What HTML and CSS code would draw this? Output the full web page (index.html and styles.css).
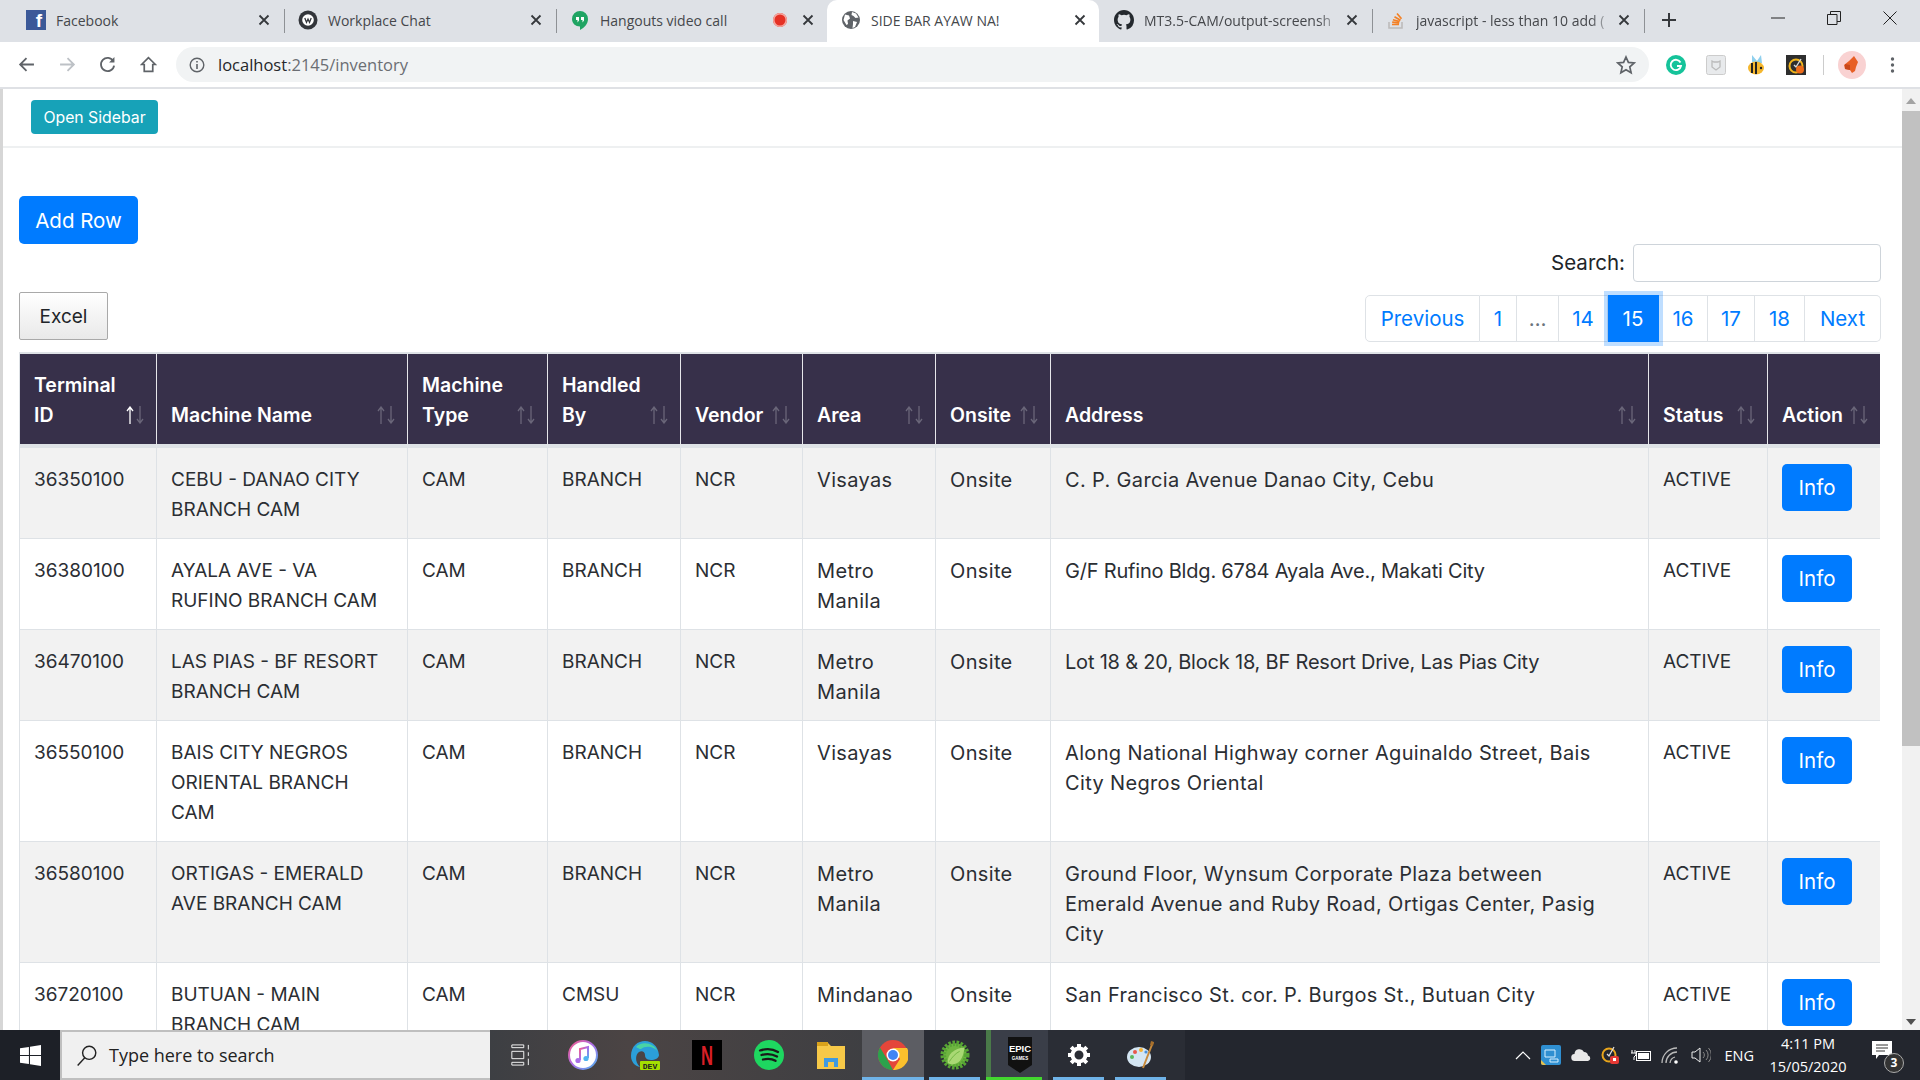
FILE: index.html
```html
<!DOCTYPE html>
<html lang="en">
<head>
    <meta charset="UTF-8">
    <title>SIDE BAR AYAW NA!</title>
    <link rel="stylesheet" href="styles.css">
</head>
<body>
    <svg class="defs" width="0" height="0">
        <symbol id="sort" viewBox="0 0 19 18">
            <path class="up" d="M4 18V1M1 5l3-4 3 4" fill="none" stroke-width="1.3"/>
            <path class="down" d="M14 0v17M11 13l3 4 3-4" fill="none" stroke-width="1.3"/>
        </symbol>
        <symbol id="x" viewBox="0 0 12 12">
            <path d="M1.5 1.5l9 9M10.5 1.5l-9 9" stroke="#35383c" stroke-width="1.8" fill="none"/>
        </symbol>
    </svg>

    <!-- chrome tabs -->
    <div class="tabstrip">
        <div class="tab">
            <span class="fb-icon">f</span>
            <span class="tab-title">Facebook</span>
            <svg class="tab-close"><use href="#x"/></svg>
        </div>
        <div class="tab">
            <svg class="favicon" viewBox="0 0 20 20"><circle cx="10" cy="10" r="9.5" fill="#33363b"/><circle cx="10" cy="10" r="5.8" fill="#fff"/><path d="M6.8 8l1.7 4.4L10 9l1.500 3.400L13.200 8" stroke="#33363b" stroke-width="1.300" fill="none"/></svg>
            <span class="tab-title">Workplace Chat</span>
            <svg class="tab-close"><use href="#x"/></svg>
        </div>
        <div class="tab">
            <svg class="favicon" viewBox="0 0 20 20"><path d="M10 1a8 8 0 0 0-8 8c0 4.400 3.600 7.500 8 7.500V20c4.500-2.200 8-6.300 8-11a8 8 0 0 0-8-8z" fill="#1fa463"/><path d="M6 7h3v3.500L7.500 12.500V10H6zM11 7h3v3.500l-1.500 2V10H11z" fill="#fff"/></svg>
            <span class="tab-title">Hangouts video call</span>
            <span class="rec-dot"></span>
            <svg class="tab-close"><use href="#x"/></svg>
        </div>
        <div class="tab tab-active">
            <svg class="favicon" viewBox="0 0 20 20"><circle cx="10" cy="10" r="9" fill="#5f6368"/><path d="M4 4.500l4 1 1 3-2.500 2L7 14l-1.500 1L2.500 10zM11 2l4 1.500 2.500 4-3 .5-2-2-2-1zM12 11l4 1-2 5-2.500 1 .5-4z" fill="#fff"/></svg>
            <span class="tab-title">SIDE BAR AYAW NA!</span>
            <svg class="tab-close"><use href="#x"/></svg>
        </div>
        <div class="tab">
            <svg class="favicon favicon-lg" viewBox="0 0 16 16"><path fill="#24292e" d="M8 0C3.580 0 0 3.580 0 8c0 3.540 2.290 6.530 5.470 7.590.4.070.55-.17.55-.38v-1.340c-2.230.48-2.700-1.070-2.700-1.070-.36-.92-.89-1.170-.89-1.170-.73-.5.050-.49.050-.49.800.060 1.230.83 1.230.83.710 1.220 1.870.87 2.330.66.070-.52.280-.87.510-1.070-1.780-.2-3.640-.89-3.640-3.950 0-.87.310-1.590.820-2.150-.080-.2-.36-1.020.080-2.120 0 0 .67-.21 2.200.82a7.600 7.600 0 0 1 4 0c1.530-1.040 2.200-.82 2.200-.82.440 1.100.160 1.920.080 2.120.510.560.820 1.270.820 2.150 0 3.070-1.870 3.750-3.650 3.950.290.250.540.730.540 1.480v2.200c0 .210.150.460.550.380A8 8 0 0 0 16 8c0-4.420-3.580-8-8-8z"/></svg>
            <span class="tab-title tab-fade">MT3.5-CAM/output-screensh</span>
            <svg class="tab-close"><use href="#x"/></svg>
        </div>
        <div class="tab">
            <svg class="favicon" viewBox="0 0 20 20"><path d="M3 12v6h13v-6" fill="none" stroke="#bcbbbb" stroke-width="1.600"/><path d="M6 14.500h7M6.200 12.200l7 .6M6.900 9.700l6.800 1.800M8.500 6.800l6 3.400M11 3.500l4.500 5.300" stroke="#f48024" stroke-width="1.700"/></svg>
            <span class="tab-title tab-fade">javascript - less than 10 add (</span>
            <svg class="tab-close"><use href="#x"/></svg>
        </div>
        <svg class="new-tab" viewBox="0 0 16 16"><path d="M8 1v14M1 8h14" stroke="#35383c" stroke-width="2"/></svg>
        <div class="window-btns">
            <svg viewBox="0 0 14 14"><path d="M0 7h14" stroke="#222" stroke-width="1"/></svg>
            <svg viewBox="0 0 14 14"><path d="M.5 3.500h9.500v10H.5zM3.500 3.500V.5h10v10H10" fill="none" stroke="#222"/></svg>
            <svg viewBox="0 0 14 14"><path d="M.5.5l13 13M13.500.5l-13 13" stroke="#222"/></svg>
        </div>
    </div>

    <!-- address bar -->
    <div class="toolbar">
        <div class="nav-btns">
            <svg viewBox="0 0 16 16"><path d="M15 8H2M8 2L2 8l6 6" fill="none" stroke="#5f6368" stroke-width="1.700"/></svg>
            <svg viewBox="0 0 16 16"><path d="M1 8h13M8 2l6 6-6 6" fill="none" stroke="#bdc1c6" stroke-width="1.700"/></svg>
            <svg viewBox="0 0 16 16"><path d="M13.500 5A6.200 6.200 0 1 0 14.200 9" fill="none" stroke="#5f6368" stroke-width="1.700"/><path d="M14.500 1v5h-5z" fill="#5f6368"/></svg>
            <svg viewBox="0 0 16 16"><path d="M8 1.500L1.500 8H4v6.500h8V8h2.500z" fill="none" stroke="#5f6368" stroke-width="1.600"/></svg>
        </div>
        <div class="omnibox">
            <svg class="info-icon" viewBox="0 0 16 16"><circle cx="8" cy="8" r="6.800" fill="none" stroke="#5f6368" stroke-width="1.400"/><path d="M8 7v5M8 4v1.600" stroke="#5f6368" stroke-width="1.600"/></svg>
            <span class="url"><span class="url-host">localhost</span>:2145/inventory</span>
            <svg class="star-icon" viewBox="0 0 20 20"><path d="M10 2l2.400 5.400 5.800.6-4.400 3.900 1.300 5.800L10 14.700l-5.100 3 1.300-5.800L1.800 8l5.800-.6z" fill="none" stroke="#5f6368" stroke-width="1.700"/></svg>
        </div>
        <div class="extensions">
            <svg viewBox="0 0 20 20"><circle cx="10" cy="10" r="10" fill="#15c39a"/><path d="M14.500 7.500A5.200 5.200 0 1 0 15 11h-4" fill="none" stroke="#fff" stroke-width="1.800"/></svg>
            <svg viewBox="0 0 20 20"><rect x=".5" y=".5" width="19" height="19" rx="2" fill="#e8eaec" stroke="#ccc"/><path d="M6 6l2 1h4l2-1v6l-4 3-4-3z" fill="none" stroke="#bbb" stroke-width="1.300"/></svg>
            <svg viewBox="0 0 20 20"><path d="M6 0l5 6 4-6 1 8H6z" fill="#8fd0ee"/><ellipse cx="10" cy="13" rx="8" ry="6.500" fill="#f5b72e"/><path d="M6 8v10M10 7v12" stroke="#222" stroke-width="2"/><circle cx="15" cy="13" r="1.200" fill="#222"/></svg>
            <svg viewBox="0 0 20 20"><rect width="20" height="20" fill="#2e2e2e"/><circle cx="10" cy="11" r="6.500" fill="none" stroke="#f2b61c" stroke-width="2"/><path d="M8 10l2 2 5-8" fill="none" stroke="#ddd" stroke-width="1.400"/><circle cx="14" cy="14.500" r="4" fill="#ef6c1a"/></svg>
        </div>
        <span class="toolbar-sep"></span>
        <div class="avatar">
            <svg viewBox="0 0 28 28"><path d="M16 5l4 6-2 5-1 4-3 2-2-3-5-1-1-4 5-4z" fill="#e85f25"/><path d="M7 13l5 1v5l-5-1z" fill="#c9481b"/></svg>
        </div>
        <svg class="dots" viewBox="0 0 4 16"><circle cx="2" cy="2" r="1.700" fill="#5f6368"/><circle cx="2" cy="8" r="1.700" fill="#5f6368"/><circle cx="2" cy="14" r="1.700" fill="#5f6368"/></svg>
    </div>

    <div class="viewport">
        <div class="page">
            <div class="topbar">
                <button class="btn btn-sidebar">Open Sidebar</button>
            </div>
            <div class="content">
                <button class="btn btn-primary btn-add">Add Row</button>

                <div class="table-tools">
                    <button class="btn-excel">Excel</button>
                    <div class="tools-right">
                        <label class="search-label">Search: <input class="search-input" type="text"></label>
                        <ul class="pager">
                            <li class="w-prev"><a>Previous</a></li>
                            <li class="w-1"><a>1</a></li>
                            <li class="w-dots"><a class="muted">…</a></li>
                            <li class="w-14"><a>14</a></li>
                            <li class="w-15 current"><a>15</a></li>
                            <li class="w-16"><a>16</a></li>
                            <li class="w-17"><a>17</a></li>
                            <li class="w-18"><a>18</a></li>
                            <li class="w-next"><a>Next</a></li>
                        </ul>
                    </div>
                </div>

                <table class="inventory">
                    <colgroup>
                        <col class="c-id"><col class="c-name"><col class="c-type"><col class="c-by"><col class="c-vendor">
                        <col class="c-area"><col class="c-onsite"><col class="c-address"><col class="c-status"><col class="c-action">
                    </colgroup>
                    <thead>
                        <tr>
                            <th>Terminal ID<svg class="sort sort-asc"><use href="#sort"/></svg></th>
                            <th>Machine Name<svg class="sort"><use href="#sort"/></svg></th>
                            <th>Machine Type<svg class="sort"><use href="#sort"/></svg></th>
                            <th>Handled By<svg class="sort"><use href="#sort"/></svg></th>
                            <th>Vendor<svg class="sort"><use href="#sort"/></svg></th>
                            <th>Area<svg class="sort"><use href="#sort"/></svg></th>
                            <th>Onsite<svg class="sort"><use href="#sort"/></svg></th>
                            <th>Address<svg class="sort"><use href="#sort"/></svg></th>
                            <th>Status<svg class="sort"><use href="#sort"/></svg></th>
                            <th>Action<svg class="sort"><use href="#sort"/></svg></th>
                        </tr>
                    </thead>
                    <tbody>
                        <tr>
                            <td>36350100</td><td>CEBU - DANAO CITY BRANCH CAM</td><td>CAM</td><td>BRANCH</td><td>NCR</td><td>Visayas</td><td>Onsite</td>
                            <td>C. P. Garcia Avenue Danao City, Cebu</td><td>ACTIVE</td><td><button class="btn btn-primary btn-info">Info</button></td>
                        </tr>
                        <tr>
                            <td>36380100</td><td>AYALA AVE - VA RUFINO BRANCH CAM</td><td>CAM</td><td>BRANCH</td><td>NCR</td><td>Metro Manila</td><td>Onsite</td>
                            <td class="addr-tight">G/F Rufino Bldg. 6784 Ayala Ave., Makati City</td><td>ACTIVE</td><td><button class="btn btn-primary btn-info">Info</button></td>
                        </tr>
                        <tr>
                            <td>36470100</td><td>LAS PIAS - BF RESORT BRANCH CAM</td><td>CAM</td><td>BRANCH</td><td>NCR</td><td>Metro Manila</td><td>Onsite</td>
                            <td class="addr-tight">Lot 18 &amp; 20, Block 18, BF Resort Drive, Las Pias City</td><td>ACTIVE</td><td><button class="btn btn-primary btn-info">Info</button></td>
                        </tr>
                        <tr>
                            <td>36550100</td><td>BAIS CITY NEGROS ORIENTAL BRANCH CAM</td><td>CAM</td><td>BRANCH</td><td>NCR</td><td>Visayas</td><td>Onsite</td>
                            <td>Along National Highway corner Aguinaldo Street, Bais City Negros Oriental</td><td>ACTIVE</td><td><button class="btn btn-primary btn-info">Info</button></td>
                        </tr>
                        <tr>
                            <td>36580100</td><td>ORTIGAS - EMERALD AVE BRANCH CAM</td><td>CAM</td><td>BRANCH</td><td>NCR</td><td>Metro Manila</td><td>Onsite</td>
                            <td>Ground Floor, Wynsum Corporate Plaza between<br>Emerald Avenue and Ruby Road, Ortigas Center, Pasig<br>City</td><td>ACTIVE</td><td><button class="btn btn-primary btn-info">Info</button></td>
                        </tr>
                        <tr>
                            <td>36720100</td><td>BUTUAN - MAIN BRANCH CAM</td><td>CAM</td><td>CMSU</td><td>NCR</td><td>Mindanao</td><td>Onsite</td>
                            <td>San Francisco St. cor. P. Burgos St., Butuan City</td><td>ACTIVE</td><td><button class="btn btn-primary btn-info">Info</button></td>
                        </tr>
                    </tbody>
                </table>
            </div>
        </div>
        <div class="scrollbar">
            <span class="arrow-up"></span>
            <span class="thumb"></span>
            <span class="arrow-down"></span>
        </div>
    </div>

    <!-- windows taskbar -->
    <div class="taskbar">
        <div class="start">
            <svg viewBox="0 0 20 20"><path d="M0 3l8.500-1.200V9.500H0zM9.500 1.600L20 0v9.500H9.500zM0 10.500h8.500v7.700L0 17zM9.500 10.500H20V20L9.500 18.400z" fill="#fff"/></svg>
        </div>
        <div class="task-search">
            <svg viewBox="0 0 20 20"><circle cx="12" cy="8" r="6" fill="none" stroke="#222" stroke-width="1.300"/><path d="M8 12.500L1.500 19.500" stroke="#222" stroke-width="1.300"/></svg>
            <span>Type here to search</span>
        </div>
        <div class="task-icons">
            <div class="task-item"><svg viewBox="0 0 24 24"><path d="M2 1h13v3H2zM2 8h13v8H2zM2 20h13v3H2zM20 1v5M20 9v4M20 16v7" fill="none" stroke="#fff" stroke-width="1"/></svg></div>
            <div class="task-item"><svg viewBox="0 0 30 30"><defs><linearGradient id="itunes" x1="0" y1="0" x2="1" y2="1"><stop offset="0" stop-color="#f55a8a"/><stop offset=".5" stop-color="#a96ee8"/><stop offset="1" stop-color="#4fb4ef"/></linearGradient></defs><circle cx="15" cy="15" r="14" fill="#fff" stroke="url(#itunes)" stroke-width="2"/><path d="M12 20V9l8-2v11" fill="none" stroke="url(#itunes)" stroke-width="2"/><circle cx="10" cy="20.500" r="2.600" fill="#a96ee8"/><circle cx="18" cy="18.500" r="2.600" fill="#4fb4ef"/></svg></div>
            <div class="task-item"><svg viewBox="0 0 30 30"><path d="M1 16C1 6 8 1 15 1s13 5 14 14c0 3-4 5-8 5-5 0-6-3-6-5 0-3-3-5-6-3s-5 9 1 15C5 26 1 22 1 16z" fill="#2b9fd9"/><path d="M6 7C11 1 24 2 28 12c-3-5-12-7-17-3-1 .5-3-1-5-2z" fill="#49d3a6"/><rect x="10" y="21" width="20" height="9" rx="1" fill="#a5e000"/><text x="20" y="28.500" class="dev-text">DEV</text></svg></div>
            <div class="task-item"><svg viewBox="0 0 30 30"><rect width="30" height="30" fill="#000"/><text x="15" y="25" class="netflix-text" textLength="12" lengthAdjust="spacingAndGlyphs">N</text></svg></div>
            <div class="task-item"><svg viewBox="0 0 30 30"><circle cx="15" cy="15" r="15" fill="#1ed760"/><path d="M6 10.500c6-2 13-1.500 18 1.500M7.500 15c5-1.500 11-1 15.500 1.500M9 19.500c4-1 9-.8 12.500 1.300" fill="none" stroke="#1a1a1a" stroke-width="2.300" stroke-linecap="round"/></svg></div>
            <div class="task-item"><svg viewBox="0 0 30 30"><path d="M1 3h11l3 3h14v23H1z" fill="#f7c948"/><path d="M1 2h11v4H1z" fill="#d9a21b"/><path d="M8 27V18h14v9h-4v-5h-6v5z" fill="#3f9ae0"/></svg></div>
            <div class="task-item task-open task-hover"><svg viewBox="0 0 30 30"><circle cx="15" cy="15" r="15" fill="#e4463a"/><path d="M15 30A15 15 0 0 1 2 7.500L9 19z" fill="#2ca24c"/><path d="M15 8h14a15 15 0 0 1-14 22l7-11z" fill="#fbc02d"/><circle cx="15" cy="15" r="6.500" fill="#fff"/><circle cx="15" cy="15" r="5" fill="#4285f4"/></svg></div>
            <div class="task-item task-open"><svg viewBox="0 0 32 32"><circle cx="16" cy="16" r="12.500" fill="#6fb541" stroke="#57a534" stroke-width="6" stroke-dasharray="2.500 1.500"/><path d="M8 24c0-9 7-15 18-16-1 12-6 18-13 18-2 0-4-.8-5-2z" fill="#a9d874"/><path d="M10 23c3-5 7-9 11-11" stroke="#6fb541" fill="none"/></svg></div>
            <div class="task-item task-open task-epic"><svg viewBox="0 0 26 36"><path d="M1 0h24v28l-12 8-12-8z" fill="#111"/><text x="13" y="15" class="epic-text">EPIC</text><text x="13" y="23" class="epic-sub">GAMES</text></svg></div>
            <div class="task-item task-open task-gear"><svg viewBox="0 0 24 24"><circle cx="12" cy="12" r="6.500" fill="none" stroke="#fff" stroke-width="4"/><path d="M12 1v5M12 18v5M1 12h5M18 12h5M4.200 4.200l3.500 3.500M16.300 16.300l3.500 3.500M19.800 4.200l-3.500 3.500M7.700 16.300l-3.500 3.500" stroke="#fff" stroke-width="4"/></svg></div>
            <div class="task-item task-open"><svg viewBox="0 0 30 30"><ellipse cx="13" cy="17" rx="12" ry="10" fill="#d4e6f3"/><circle cx="9" cy="12" r="2" fill="#e9584b"/><circle cx="15" cy="10" r="2" fill="#f5b335"/><circle cx="6" cy="17" r="2" fill="#5cb85c"/><circle cx="20" cy="12" r="1.600" fill="#4a90d9"/><path d="M27 2L17 28" stroke="#c88a3b" stroke-width="2"/><path d="M25 1l3 1-1 4-3-1z" fill="#a8702c"/></svg></div>
        </div>
        <div class="tray">
            <svg class="tray-icon chevron" viewBox="0 0 16 10"><path d="M1 9l7-7 7 7" fill="none" stroke="#fff" stroke-width="1.200"/></svg>
            <svg class="tray-icon" viewBox="0 0 20 20"><rect width="20" height="20" rx="2" fill="#2f8fd1"/><path d="M4 5h10v7H4zM9 14h8v3H9z" fill="none" stroke="#d8f0ff" stroke-width="1"/><path d="M0 15l5 5H2a2 2 0 0 1-2-2z" fill="#e7c14a"/></svg>
            <svg class="tray-icon" viewBox="0 0 20 14"><path d="M4 13a3.500 3.500 0 0 1-.5-7A5 5 0 0 1 13 4a4 4 0 0 1 4 3.500 2.800 2.800 0 0 1 0 5.500z" fill="#e9e9e9"/></svg>
            <svg class="tray-icon" viewBox="0 0 20 20"><circle cx="8" cy="10" r="6.500" fill="none" stroke="#e8a51c" stroke-width="2"/><path d="M6 9l2 2 5-9" fill="none" stroke="#ddd" stroke-width="1.300"/><rect x="9" y="11" width="9" height="8" rx="2" fill="#e53935"/><rect x="12" y="13" width="3" height="3" fill="#fff"/></svg>
            <svg class="tray-icon" viewBox="0 0 20 14"><rect x="5.500" y="3.500" width="14" height="9" fill="none" stroke="#fff"/><rect x="7" y="5" width="11" height="6" fill="#fff"/><path d="M1 2v3M4 2v3M0 5h5v2L3 9v3" fill="none" stroke="#fff"/></svg>
            <svg class="tray-icon" viewBox="0 0 20 20"><path d="M1 18A15 15 0 0 1 16 3M5 18A11 11 0 0 1 16 7M9 18a7 7 0 0 1 5-6" fill="none" stroke="#bbb" stroke-width="1.300"/><circle cx="15" cy="17" r="1.800" fill="#fff"/></svg>
            <svg class="tray-icon" viewBox="0 0 20 20"><path d="M1 7h3l5-4v14l-5-4H1z" fill="none" stroke="#eee"/><path d="M12 7a4 4 0 0 1 0 6M15 5a7 7 0 0 1 0 10M17.500 3a10 10 0 0 1 0 14" fill="none" stroke="#888"/></svg>
            <span class="lang">ENG</span>
            <div class="clock"><span>4:11 PM</span><span>15/05/2020</span></div>
            <div class="notify">
                <svg viewBox="0 0 20 18"><path d="M0 0h20v14H7l-3 4v-4H0z" fill="#fff"/><path d="M4 4h12M4 7h12M4 10h9" stroke="#333"/></svg>
                <span class="notify-count">3</span>
            </div>
        </div>
    </div>
</body>
</html>
```

FILE: styles.css
```css
* {
    box-sizing: border-box;
}
html, body {
    height: 100%;
}
body {
    margin: 0;
    height: 1080px;
    overflow: hidden;
    display: flex;
    flex-direction: column;
    font-family: Inter, "Open Sans", sans-serif;
    background-color: #fff;
    color: #212529;
}
.defs {
    position: absolute;
}

/* tabs */
.tabstrip {
    height: 42px;
    flex: none;
    display: flex;
    align-items: center;
    padding-left: 11px;
    background-color: #dee1e6;
    font-family: "Open Sans", sans-serif;
    font-size: 14px;
    color: #45474b;
}
.tab {
    width: 272px;
    height: 42px;
    flex: none;
    display: flex;
    align-items: center;
    padding: 0 13px 2px 15px;
    position: relative;
}
.tab::after {
    content: "";
    position: absolute;
    right: -2px;
    top: 9px;
    height: 24px;
    width: 1px;
    background-color: #8e9195;
}
.tab:nth-child(3)::after,
.tab:nth-child(4)::after {
    display: none;
}
.tab-active {
    background-color: #fff;
    border-radius: 10px 10px 0 0;
    padding-left: 14px;
}
.tab-active::after {
    display: none;
}
.favicon {
    width: 20px;
    height: 20px;
    flex: none;
    margin-right: 10px;
}
.fb-icon {
    width: 20px;
    height: 20px;
    flex: none;
    margin-right: 10px;
    background-color: #3b5998;
    color: #fff;
    font-family: "Liberation Sans", sans-serif;
    font-weight: bold;
    font-size: 19px;
    line-height: 21px;
    text-align: right;
    padding-right: 4px;
}
.tab-title {
    flex: 1;
    white-space: nowrap;
}
.tab-fade {
    -webkit-mask-image: linear-gradient(to left, transparent, #000 24px);
    mask-image: linear-gradient(to left, transparent, #000 24px);
}
.rec-dot {
    width: 14px;
    height: 14px;
    flex: none;
    margin-right: 11px;
    border-radius: 50%;
    background-color: #e53125;
    box-shadow: inset 0 0 0 1.5px #f5a7a0;
}
.tab-close {
    width: 12px;
    height: 12px;
    flex: none;
    margin-left: 4px;
}
.new-tab {
    width: 16px;
    height: 16px;
    margin-left: 18px;
    margin-bottom: 2px;
}
.window-btns {
    margin-left: auto;
    display: flex;
    gap: 42px;
    padding-right: 23px;
    margin-bottom: 6px;
}
.window-btns svg {
    width: 14px;
    height: 14px;
}

/* address bar */
.toolbar {
    height: 47px;
    flex: none;
    display: flex;
    align-items: center;
    padding: 0 17px 0 18px;
    background-color: #fff;
    border-bottom: 2px solid #dfe1e5;
}
.nav-btns {
    display: flex;
    gap: 23.500px;
    width: 158px;
    flex: none;
}
.nav-btns svg {
    width: 17px;
    height: 17px;
}
.omnibox {
    width: 1473px;
    height: 35px;
    flex: none;
    display: flex;
    align-items: center;
    padding: 0 13px;
    border-radius: 18px;
    background-color: #f1f3f4;
    font-family: "Open Sans", sans-serif;
    font-size: 16.500px;
    color: #6b6e73;
}
.info-icon {
    width: 16px;
    height: 16px;
    margin-right: 13px;
}
.url {
    flex: 1;
}
.url-host {
    color: #25272a;
}
.star-icon {
    width: 20px;
    height: 20px;
}
.extensions {
    display: flex;
    gap: 20px;
    margin-left: 17px;
}
.extensions svg {
    width: 20px;
    height: 20px;
}
.toolbar-sep {
    width: 1px;
    height: 20px;
    margin: 0 14px 0 17px;
    background-color: #ccc;
}
.avatar {
    width: 28px;
    height: 28px;
    border-radius: 50%;
    background-color: #f9d2d2;
}
.dots {
    width: 5px;
    height: 16px;
    margin-left: 24px;
}

/* page */
.viewport {
    flex: 1;
    display: flex;
    min-height: 0;
}
.page {
    flex: 1;
    min-width: 0;
    overflow: hidden;
    border-left: 3px solid #d6d6d6;
}
.topbar {
    height: 59px;
    padding: 11px 0 0 28px;
    border-bottom: 2px solid #eef0f1;
}
.btn {
    display: block;
    border: none;
    color: #fff;
    font-family: inherit;
}
.btn-sidebar {
    width: 127px;
    height: 34px;
    padding: 0;
    background-color: #17a2b8;
    border-radius: 4px;
    font-size: 15.800px;
}
.content {
    padding: 48px 21px 0 16px;
}
.btn-primary {
    background-color: #007bff;
    border-radius: 5px;
}
.btn-add {
    width: 119px;
    height: 48px;
    font-size: 20.500px;
}
.table-tools {
    display: flex;
    justify-content: space-between;
    align-items: flex-end;
}
.btn-excel {
    width: 89px;
    height: 48px;
    margin-bottom: 2px;
    border: 1px solid #a9a9a9;
    border-radius: 2px;
    background: linear-gradient(#fff, #e9e9e9);
    color: #212529;
    font-family: inherit;
    font-size: 19px;
}
.tools-right {
    display: flex;
    flex-direction: column;
    align-items: flex-end;
    gap: 13px;
}
.search-label {
    display: flex;
    align-items: center;
    gap: 8px;
    font-size: 20.500px;
    line-height: 36px;
}
.search-input {
    width: 248px;
    height: 38px;
    border: 1px solid #ced4da;
    border-radius: 4px;
    background-color: #fff;
}
.pager {
    display: flex;
    list-style: none;
    margin: 0;
    padding: 0;
    height: 47px;
    font-size: 20.500px;
}
.pager li {
    display: flex;
    align-items: center;
    justify-content: center;
    border: 1px solid #dee2e6;
    border-left-width: 0;
    color: #007bff;
}
.pager li:first-child {
    border-left-width: 1px;
    border-radius: 5px 0 0 5px;
}
.pager li:last-child {
    border-radius: 0 5px 5px 0;
}
.pager .muted {
    color: #6c757d;
}
.pager .current {
    position: relative;
    background-color: #007bff;
    border-color: #007bff;
    color: #fff;
    box-shadow: 0 0 0 4px rgba(0, 123, 255, 0.25);
}
.w-prev { width: 115px; }
.w-1 { width: 37px; }
.w-dots { width: 42px; }
.w-14 { width: 49px; }
.w-15 { width: 51px; }
.w-16 { width: 49px; }
.w-17 { width: 47px; }
.w-18 { width: 50px; }
.w-next { width: 76px; }

/* table */
.inventory {
    width: 1861px;
    margin-top: 10px;
    table-layout: fixed;
    border-collapse: separate;
    border-spacing: 0;
    border-top: 2px solid #dee2e6;
    font-size: 19px;
    line-height: 30px;
}
.c-id { width: 138px; }
.c-name { width: 251px; }
.c-type { width: 140px; }
.c-by { width: 133px; }
.c-vendor { width: 122px; }
.c-area { width: 133px; }
.c-onsite { width: 115px; }
.c-address { width: 598px; }
.c-status { width: 119px; }
.c-action { width: 112px; }
.inventory th {
    position: relative;
    padding: 16px 30px 14px 14px;
    background-color: #37304a;
    color: #fff;
    font-size: 19.500px;
    font-weight: 600;
    text-align: left;
    vertical-align: bottom;
    border-right: 1px solid #e6e6ea;
    border-bottom: 4px solid #dee2e6;
}
.inventory th:last-child {
    border-right: none;
    padding-right: 0;
}
.sort {
    position: absolute;
    right: 11px;
    bottom: 20px;
    width: 19px;
    height: 18px;
}
.sort-asc {
    --up-color: #fff;
}
.up {
    stroke: var(--up-color, #6a6679);
}
.down {
    stroke: #6a6679;
}
.inventory td {
    padding: 17px 14px 13px;
    vertical-align: top;
    border-right: 1px solid #dee2e6;
    border-bottom: 1px solid #dee2e6;
    color: #2b2e33;
}
/* mixed case columns run wider than the caps ones */
.inventory td:nth-child(6),
.inventory td:nth-child(7),
.inventory td:nth-child(8) {
    font-size: 20px;
    letter-spacing: 0.35px;
}
.inventory td.addr-tight {
    letter-spacing: -0.2px;
}
.inventory td:first-child,
.inventory th:first-child {
    border-left: 1px solid #dee2e6;
}
.inventory td:last-child {
    border-right: none;
    padding-top: 15px;
}
.inventory tbody tr:nth-child(odd) td {
    background-color: #f2f2f2;
}
.btn-info {
    width: 70px;
    height: 47px;
    margin-top: 1px;
    font-size: 20.500px;
}

/* scrollbar */
.scrollbar {
    width: 18px;
    flex: none;
    display: flex;
    flex-direction: column;
    align-items: center;
    background-color: #f1f1f1;
}
.arrow-up {
    width: 0;
    height: 0;
    margin: 9px 0 7px;
    border: 5px solid transparent;
    border-top: none;
    border-bottom: 6px solid #a3a3a3;
}
.thumb {
    width: 100%;
    height: 635px;
    background-color: #c1c1c1;
}
.arrow-down {
    width: 0;
    height: 0;
    margin: auto 0 5px;
    border: 5px solid transparent;
    border-bottom: none;
    border-top: 6px solid #505050;
}

/* taskbar */
.taskbar {
    height: 50px;
    flex: none;
    display: flex;
    align-items: stretch;
    background-color: #23262e;
    color: #fff;
    font-family: "Open Sans", sans-serif;
}
.start {
    width: 60px;
    display: flex;
    align-items: center;
    justify-content: center;
    background-color: #1d2027;
}
.start svg {
    width: 21px;
    height: 21px;
}
.task-search {
    width: 430px;
    display: flex;
    align-items: center;
    gap: 11px;
    padding-left: 14px;
    background-color: #f0f0f0;
    border: 2px solid #bfbfbf;
    border-width: 2px 0 2px 2px;
    color: #222;
    font-size: 18px;
}
.task-search svg {
    width: 22px;
    height: 24px;
}
.task-icons {
    display: flex;
    background: linear-gradient(to right, #3d3f43, #4b4444 20%, #3c3e42 60%, #2a2d35 62%);
    width: 695px;
}
.task-item {
    width: 62px;
    display: flex;
    align-items: center;
    justify-content: center;
    position: relative;
}
.task-item svg {
    width: 30px;
    height: 30px;
}
.task-item:first-child svg {
    width: 22px;
    height: 24px;
}
.task-open::after {
    content: "";
    position: absolute;
    bottom: 0;
    left: 5px;
    right: 6px;
    height: 3px;
    background-color: #6fb3e8;
}
.task-hover {
    background-color: #5c5d63;
}
.task-hover::after {
    left: 0;
    right: 0;
}
.task-epic {
    background-color: #3a3e48;
    border-left: 5px solid #4a7a49;
}
.task-epic::after {
    left: -5px;
    background-color: #43d62f;
}
.task-epic svg {
    width: 26px;
    height: 36px;
}
.task-gear svg {
    width: 24px;
    height: 24px;
}
.dev-text {
    font-family: "Liberation Mono", monospace;
    font-size: 8px;
    font-weight: bold;
    fill: #222;
    text-anchor: middle;
}
.netflix-text {
    font-family: "Liberation Sans", sans-serif;
    font-size: 28px;
    font-weight: bold;
    fill: #d81f26;
    text-anchor: middle;
}
.epic-text {
    font-family: "Liberation Sans", sans-serif;
    font-size: 9.500px;
    font-weight: bold;
    fill: #fff;
    text-anchor: middle;
}
.epic-sub {
    font-family: "Liberation Sans", sans-serif;
    font-size: 4.500px;
    font-weight: bold;
    fill: #fff;
    text-anchor: middle;
}
.tray {
    flex: 1;
    display: flex;
    align-items: center;
    justify-content: flex-end;
    gap: 10px;
    padding-right: 16px;
    font-size: 14.500px;
}
.tray-icon {
    width: 20px;
    height: 20px;
    flex: none;
}
.chevron {
    width: 16px;
    height: 10px;
}
.lang {
    margin: 0 2px 0 3px;
}
.clock {
    width: 84px;
    display: flex;
    flex-direction: column;
    align-items: center;
    line-height: 23px;
}
.notify {
    position: relative;
    width: 32px;
    height: 32px;
    margin-left: 12px;
}
.notify svg {
    width: 20px;
    height: 18px;
    margin-top: 2px;
}
.notify-count {
    position: absolute;
    right: 0;
    bottom: -2px;
    width: 20px;
    height: 20px;
    border: 1px solid #aaa;
    border-radius: 50%;
    background-color: #333;
    font-size: 12px;
    font-weight: bold;
    line-height: 18px;
    text-align: center;
}
```
